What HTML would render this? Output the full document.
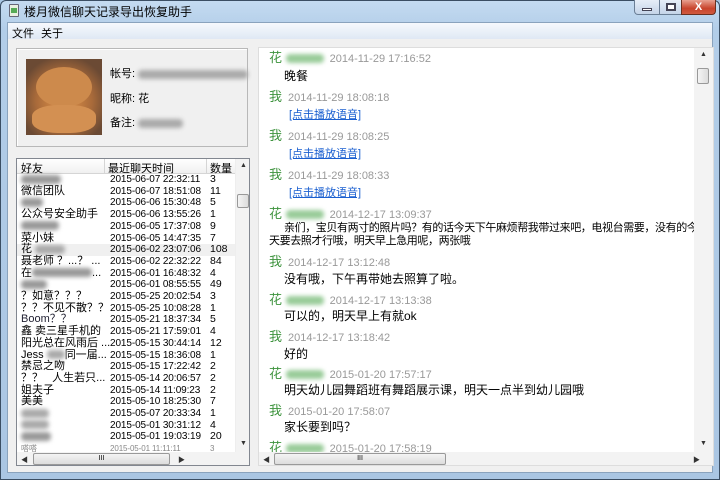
<!DOCTYPE html>
<html><head><meta charset="utf-8"><style>
*{margin:0;padding:0;box-sizing:border-box}
body{width:720px;height:480px;overflow:hidden;font-family:"Liberation Sans","Noto Sans CJK SC","WenQuanYi Zen Hei",sans-serif;font-size:11px;color:#000;background:#a9c7e4;position:relative}
.abs{position:absolute}
#frame{left:0;top:0;width:720px;height:480px;background:linear-gradient(#c4dbf1,#b2cde8 30px,#aac6e3);border:1px solid #3b4e63;border-radius:6px 6px 0 0}
#client{left:7px;top:22px;width:706px;height:451px;background:#f0f0f0;border:1px solid #8aa3bd}
#menu{left:8px;top:23px;width:704px;height:16px;background:linear-gradient(#f6f9fd,#dfe8f4);}
.blur{display:inline-block;height:9px;border-radius:4px;filter:blur(2px);vertical-align:middle}
.row{position:absolute;left:0;height:11.7px;line-height:11.7px;white-space:nowrap;font-size:11px}
.c1{position:absolute;left:4px}.c2{position:absolute;left:93px;font-size:10px;letter-spacing:-0.1px}.c3{position:absolute;left:193px;font-size:10.5px}
.hd{position:absolute;font-size:13px;color:#3d933d;left:10px}
.tm{font-size:11px;color:#999;margin-left:6px}
.tx{position:absolute;left:25px;font-size:12px;color:#000}
.lk{position:absolute;left:30px;font-size:11px;color:#1a5fd0;text-decoration:underline}
.sbtn{position:absolute;font-size:7px;color:#333}
</style></head><body>
<div id="frame" class="abs"></div>
<div class="abs" style="left:9px;top:4px;width:10px;height:13px;background:#e8f0e0;border:1px solid #667;border-radius:1px"><div style="margin:3px 1px;width:6px;height:5px;background:#5a5"></div></div>
<div class="abs" style="left:24px;top:3px;font-size:12px;color:#000">楼月微信聊天记录导出恢复助手</div>
<div class="abs" style="left:634px;top:0;width:26px;height:15px;border:1px solid #6a7e95;border-top:none;border-radius:0 0 0 4px;background:linear-gradient(#e6eef8,#c4d4e8)"><div style="margin:8px auto 0;width:10px;height:3px;background:#fff;border:1px solid #445"></div></div>
<div class="abs" style="left:659px;top:0;width:23px;height:15px;border:1px solid #6a7e95;border-top:none;background:linear-gradient(#e6eef8,#c4d4e8)"><div style="margin:3px auto 0;width:10px;height:8px;background:#fff;border:2px solid #445"></div></div>
<div class="abs" style="left:681px;top:0;width:35px;height:15px;border:1px solid #6a3020;border-top:none;border-radius:0 0 4px 0;background:linear-gradient(#e8a090,#c8442c 60%,#d05a40);color:#fff;font-weight:bold;text-align:center;font-size:11px;line-height:14px">X</div>
<div id="client" class="abs"></div>
<div id="menu" class="abs"></div>
<div class="abs" style="left:12px;top:25px;font-size:11px">文件</div>
<div class="abs" style="left:41px;top:25px;font-size:11px">关于</div>

<div class="abs" style="left:16px;top:48px;width:232px;height:99px;border:1px solid #b8b8b8;box-shadow:inset 1px 1px #fff"></div>
<div class="abs" style="left:26px;top:59px;width:76px;height:76px;background:radial-gradient(circle at 50% 55%,#d58a4a 0,#c07b40 30%,#a86a3a 50%,#6b4a34 80%);"></div>
<div class="abs" style="left:36px;top:67px;width:56px;height:40px;border-radius:50%;background:#cd8a4c"></div>
<div class="abs" style="left:32px;top:105px;width:64px;height:28px;border-radius:40%;background:#d39052"></div>
<div class="abs" style="left:110px;top:65px">帐号: <span class="blur" style="width:110px;background:#aaa"></span></div>
<div class="abs" style="left:110px;top:90px">昵称: 花</div>
<div class="abs" style="left:110px;top:114px">备注: <span class="blur" style="width:45px;background:#aaa"></span></div>

<div class="abs" style="left:16px;top:158px;width:234px;height:308px;background:#fff;border:1px solid #828790;overflow:hidden">
 <div class="abs" style="left:0;top:0;width:218px;height:15px;background:linear-gradient(#fff,#f0f0f0);border-bottom:1px solid #d5d5d5">
  <span class="abs" style="left:4px;top:1px">好友</span><span class="abs" style="left:91px;top:1px">最近聊天时间</span><span class="abs" style="left:193px;top:1px">数量</span>
  <div class="abs" style="left:87px;top:0;width:1px;height:15px;background:#d5d5d5"></div>
  <div class="abs" style="left:189px;top:0;width:1px;height:15px;background:#d5d5d5"></div>
 </div>
 <div class="abs" style="left:0;top:15px;width:218px;height:280px">
  <div class="row" style="top:0"><span class="c1"><span class="blur" style="width:40px;background:#999"></span></span><span class="c2">2015-06-07 22:32:11</span><span class="c3">3</span></div>
  <div class="row" style="top:11.7px"><span class="c1">微信团队</span><span class="c2">2015-06-07 18:51:08</span><span class="c3">11</span></div>
  <div class="row" style="top:23.4px"><span class="c1"><span class="blur" style="width:22px;background:#999"></span></span><span class="c2">2015-06-06 15:30:48</span><span class="c3">5</span></div>
  <div class="row" style="top:35.1px"><span class="c1">公众号安全助手</span><span class="c2">2015-06-06 13:55:26</span><span class="c3">1</span></div>
  <div class="row" style="top:46.8px"><span class="c1"><span class="blur" style="width:38px;background:#999"></span></span><span class="c2">2015-06-05 17:37:08</span><span class="c3">9</span></div>
  <div class="row" style="top:58.5px"><span class="c1">菜小妹</span><span class="c2">2015-06-05 14:47:35</span><span class="c3">7</span></div>
  <div class="row" style="top:70.2px;width:218px;background:#f0f0f0"><span class="c1">花 <span class="blur" style="width:30px;background:#aaa"></span></span><span class="c2">2015-06-02 23:07:06</span><span class="c3">108</span></div>
  <div class="row" style="top:81.9px"><span class="c1">聂老师 ？...？ ...</span><span class="c2">2015-06-02 22:32:22</span><span class="c3">84</span></div>
  <div class="row" style="top:93.6px"><span class="c1">在<span class="blur" style="width:60px;background:#999"></span>...</span><span class="c2">2015-06-01 16:48:32</span><span class="c3">4</span></div>
  <div class="row" style="top:105.3px"><span class="c1"><span class="blur" style="width:26px;background:#999"></span></span><span class="c2">2015-06-01 08:55:55</span><span class="c3">49</span></div>
  <div class="row" style="top:117px"><span class="c1">？如意？？？</span><span class="c2">2015-05-25 20:02:54</span><span class="c3">3</span></div>
  <div class="row" style="top:128.7px"><span class="c1">？？不见不散？？</span><span class="c2">2015-05-25 10:08:28</span><span class="c3">1</span></div>
  <div class="row" style="top:140.4px"><span class="c1" style="color:#223">Boom？？</span><span class="c2">2015-05-21 18:37:34</span><span class="c3">5</span></div>
  <div class="row" style="top:152.1px"><span class="c1">鑫 卖三星手机的</span><span class="c2">2015-05-21 17:59:01</span><span class="c3">4</span></div>
  <div class="row" style="top:163.8px"><span class="c1">阳光总在风雨后 ...</span><span class="c2">2015-05-15 30:44:14</span><span class="c3">12</span></div>
  <div class="row" style="top:175.5px"><span class="c1">Jess <span class="blur" style="width:18px;background:#aaa"></span>同一届...</span><span class="c2">2015-05-15 18:36:08</span><span class="c3">1</span></div>
  <div class="row" style="top:187.2px"><span class="c1">禁忌之吻</span><span class="c2">2015-05-15 17:22:42</span><span class="c3">2</span></div>
  <div class="row" style="top:198.9px"><span class="c1">？？&nbsp;&nbsp;&nbsp;人生若只...</span><span class="c2">2015-05-14 20:06:57</span><span class="c3">2</span></div>
  <div class="row" style="top:210.6px"><span class="c1">姐夫子</span><span class="c2">2015-05-14 11:09:23</span><span class="c3">2</span></div>
  <div class="row" style="top:222.3px"><span class="c1">美美</span><span class="c2">2015-05-10 18:25:30</span><span class="c3">7</span></div>
  <div class="row" style="top:234px"><span class="c1"><span class="blur" style="width:28px;background:#aaa"></span></span><span class="c2">2015-05-07 20:33:34</span><span class="c3">1</span></div>
  <div class="row" style="top:245.7px"><span class="c1"><span class="blur" style="width:28px;background:#aaa"></span></span><span class="c2">2015-05-01 30:31:12</span><span class="c3">4</span></div>
  <div class="row" style="top:257.4px"><span class="c1"><span class="blur" style="width:30px;background:#999"></span></span><span class="c2">2015-05-01 19:03:19</span><span class="c3">20</span></div>
  <div class="row" style="top:269.1px;color:#888;font-size:8px"><span class="c1">嗒嗒</span><span class="c2" style="font-size:8px">2015-05-01 11:11:11</span><span class="c3" style="font-size:8px">3</span></div>
 </div>
 <div class="abs" style="left:218px;top:0;width:15px;height:293px;background:#f3f3f3;border-left:1px solid #eee">
  <div class="sbtn" style="left:4px;top:3px">▲</div>
  <div class="abs" style="left:1px;top:35px;width:12px;height:14px;background:linear-gradient(90deg,#f4f4f4,#dcdcdc);border:1px solid #999;border-radius:2px"></div>
  <div class="sbtn" style="left:4px;top:281px">▼</div>
 </div>
 <div class="abs" style="left:0;top:293px;width:233px;height:14px;background:#f3f3f3">
  <div class="sbtn" style="left:4px;top:3px">◀</div>
  <div class="abs" style="left:16px;top:1px;width:137px;height:12px;background:linear-gradient(#f4f4f4,#dcdcdc);border:1px solid #999;border-radius:2px;text-align:center;font-size:7px;line-height:10px">III</div>
  <div class="sbtn" style="left:161px;top:3px">▶</div>
 </div>
</div>

<div class="abs" style="left:258px;top:47px;width:456px;height:419px;background:#fff;border:1px solid #ddd;overflow:hidden">
 <div class="abs" style="left:0;top:0;width:435px;height:404px">
  <div class="hd" style="top:-1px">花 <span class="blur" style="width:38px;background:#9c9"></span><span class="tm">2014-11-29 17:16:52</span></div>
  <div class="tx" style="top:19px">晚餐</div>
  <div class="hd" style="top:38px">我<span class="tm">2014-11-29 18:08:18</span></div>
  <div class="lk" style="top:58px">[点击播放语音]</div>
  <div class="hd" style="top:77px">我<span class="tm">2014-11-29 18:08:25</span></div>
  <div class="lk" style="top:97px">[点击播放语音]</div>
  <div class="hd" style="top:116px">我<span class="tm">2014-11-29 18:08:33</span></div>
  <div class="lk" style="top:136px">[点击播放语音]</div>
  <div class="hd" style="top:155px">花 <span class="blur" style="width:38px;background:#9c9"></span><span class="tm">2014-12-17 13:09:37</span></div>
  <div class="tx" style="top:174px;left:10px;width:425px;line-height:13px;white-space:nowrap;font-size:11px;letter-spacing:-0.4px"><span style="display:inline-block;width:15px"></span>亲们，宝贝有两寸的照片吗？有的话今天下午麻烦帮我带过来吧，电视台需要，没有的今<br>天要去照才行哦，明天早上急用呢，两张哦</div>
  <div class="hd" style="top:203px">我<span class="tm">2014-12-17 13:12:48</span></div>
  <div class="tx" style="top:222px">没有哦，下午再带她去照算了啦。</div>
  <div class="hd" style="top:241px">花 <span class="blur" style="width:38px;background:#9c9"></span><span class="tm">2014-12-17 13:13:38</span></div>
  <div class="tx" style="top:259px">可以的，明天早上有就ok</div>
  <div class="hd" style="top:278px">我<span class="tm">2014-12-17 13:18:42</span></div>
  <div class="tx" style="top:297px">好的</div>
  <div class="hd" style="top:315px">花 <span class="blur" style="width:38px;background:#9c9"></span><span class="tm">2015-01-20 17:57:17</span></div>
  <div class="tx" style="top:333px">明天幼儿园舞蹈班有舞蹈展示课，明天一点半到幼儿园哦</div>
  <div class="hd" style="top:352px">我<span class="tm">2015-01-20 17:58:07</span></div>
  <div class="tx" style="top:370px">家长要到吗？</div>
  <div class="hd" style="top:389px">花 <span class="blur" style="width:38px;background:#9c9"></span><span class="tm">2015-01-20 17:58:19</span></div>
 </div>
 <div class="abs" style="left:435px;top:0;width:20px;height:404px;background:#f3f3f3">
  <div class="sbtn" style="left:6px;top:3px">▲</div>
  <div class="abs" style="left:3px;top:20px;width:12px;height:16px;background:linear-gradient(90deg,#f4f4f4,#dcdcdc);border:1px solid #999;border-radius:2px"></div>
  <div class="sbtn" style="left:6px;top:392px">▼</div>
 </div>
 <div class="abs" style="left:0;top:404px;width:455px;height:15px;background:#f3f3f3">
  <div class="sbtn" style="left:4px;top:3px">◀</div>
  <div class="abs" style="left:15px;top:1px;width:172px;height:12px;background:linear-gradient(#f4f4f4,#dcdcdc);border:1px solid #999;border-radius:2px;text-align:center;font-size:7px;line-height:10px">III</div>
  <div class="sbtn" style="left:434px;top:3px">▶</div>
 </div>
</div>
</body></html>
